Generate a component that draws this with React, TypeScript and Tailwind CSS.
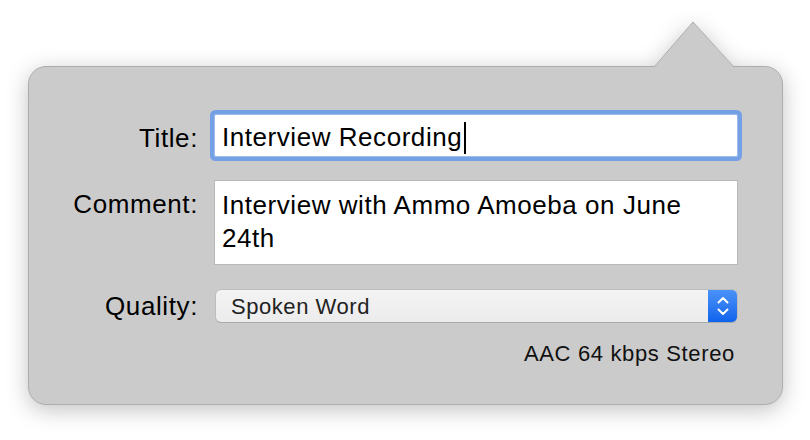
export default function App() {
  return (
    <div className="h-[440px] w-[810px] bg-white pl-[28px] pt-[66px] font-['Liberation_Sans',Arial,sans-serif] text-black">
      <div className="drop-shadow-[0_5px_11px_rgba(0,0,0,0.24)]">
        <div className="relative h-[339px] w-[755px] rounded-[18px] border border-[#adadad] bg-[#cbcbcb] pt-[47px]">
          <Arrow />

          <div className="flex items-start gap-[16px]">
            <Label className="pt-[8px]">Title:</Label>
            <div className="flex h-[43px] w-[524px] items-start rounded-[2px] border border-[#9fbcea] bg-white pl-[7px] pt-[6px] text-[26px] leading-[33px] shadow-[0_0_0_4px_#74a0e6]">
              <span className="tracking-[0.55px]">Interview Recording</span>
              <span className="ml-[2px] mt-[1px] h-[32px] w-[2px] bg-black" />
            </div>
          </div>

          <div className="mt-[23px] flex items-start gap-[16px]">
            <Label className="pt-[8px]">Comment:</Label>
            <div className="h-[85px] w-[524px] border border-[#b8b8b8] bg-white px-[7px] pt-[8px] text-[26px] leading-[33px] tracking-[0.55px]">
              Interview with Ammo Amoeba on June
              <br />
              24th
            </div>
          </div>

          <div className="mt-[24px] flex items-center gap-[16px]">
            <Label>Quality:</Label>
            <div className="ml-[1px] flex h-[34px] w-[523px] overflow-hidden rounded-[6px] border border-[#bdbdbd] border-b-[#a9a9a9] bg-gradient-to-b from-[#f3f3f3] to-[#ececec]">
              <div className="flex flex-1 items-center pl-[15px] text-[22px] tracking-[0.55px] text-[#222]">
                Spoken Word
              </div>
              <div className="flex w-[29px] items-center justify-center bg-gradient-to-b from-[#4a92f8] to-[#0d63ec]">
                <Chevrons />
              </div>
            </div>
          </div>

          <div className="mt-[16px] flex justify-end pr-[47px] text-[22px] leading-[30px] tracking-[0.65px] text-[#111]">
            AAC 64 kbps Stereo
          </div>
        </div>
      </div>
    </div>
  );
}

function Label({
  children,
  className = "",
}: {
  children: React.ReactNode;
  className?: string;
}) {
  return (
    <div
      className={`w-[169px] shrink-0 text-right text-[26px] leading-[33px] tracking-[0.6px] ${className}`}
    >
      {children}
    </div>
  );
}

function Arrow() {
  return (
    <svg
      className="absolute left-[625px] top-[-46px]"
      width="82"
      height="49"
      viewBox="0 0 82 49"
    >
      <path d="M1 45.5 L39 1 L79 45.5 L79 49 L1 49 Z" fill="#cbcbcb" />
      <path d="M0.5 45.5 L39 1 L79.5 45.5" fill="none" stroke="#adadad" strokeWidth="1" />
    </svg>
  );
}

function Chevrons() {
  return (
    <svg width="14" height="24" viewBox="0 0 14 24" fill="none" stroke="white" strokeWidth="2" strokeLinecap="round" strokeLinejoin="round">
      <path d="M2.5 8.5 L7 4 L11.5 8.5" />
      <path d="M2.5 15.5 L7 20 L11.5 15.5" />
    </svg>
  );
}
